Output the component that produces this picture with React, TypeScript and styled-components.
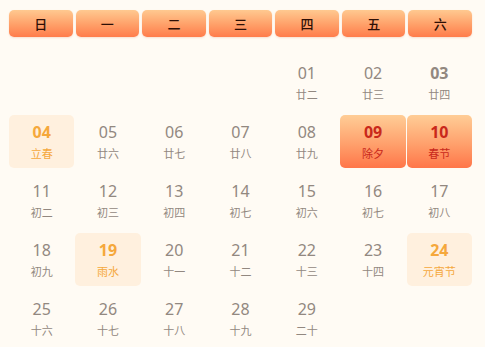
import styled, { createGlobalStyle, css } from "styled-components";

const GlobalStyle = createGlobalStyle`
  html, body {
    margin: 0;
    padding: 0;
    background: #fffbf4;
  }
  body {
    font-family: "Noto Sans", "Noto Sans CJK SC", sans-serif;
  }
`;

type Kind = "normal" | "today" | "term" | "festival";

interface Day {
  num: string;
  lunar: string;
  kind?: Kind;
}

const Page = styled.div`
  width: 463px;
  padding: 10px 13px 0 9px;
`;

const WeekRow = styled.div`
  display: grid;
  grid-template-columns: repeat(7, 1fr);
  column-gap: 3px;
  margin-bottom: 19px;
`;

const WeekCell = styled.div`
  height: 27px;
  border-radius: 5px;
  background: linear-gradient(180deg, #ffc990 0%, #ff9f68 55%, #ff7c4b 100%);
  box-shadow: 0 1px 2px rgba(220, 110, 60, 0.2);
  display: flex;
  align-items: center;
  justify-content: center;
  font-family: "Noto Sans CJK SC", sans-serif;
  font-size: 13px;
  font-weight: 500;
  color: #2e0f06;
`;

const DaysGrid = styled.div`
  display: grid;
  grid-template-columns: repeat(7, 1fr);
  column-gap: 1px;
  row-gap: 6px;
`;

const DayCell = styled.div<{ $kind: Kind }>`
  height: 53px;
  border-radius: 5px;
  display: flex;
  flex-direction: column;
  align-items: center;
  padding-top: 6px;
  box-sizing: border-box;
  color: #928880;
  ${(p) =>
    p.$kind === "term" &&
    css`
      background: #fff0de;
      color: #f5a83c;
    `}
  ${(p) =>
    p.$kind === "festival" &&
    css`
      background: linear-gradient(180deg, #ffcd96 0%, #ffa06c 55%, #ff7649 100%);
      color: #c9281b;
    `}
`;

const Num = styled.div<{ $bold: boolean }>`
  font-size: 16px;
  line-height: 22px;
  font-weight: ${(p) => (p.$bold ? 700 : 400)};
`;

const Lunar = styled.div`
  font-family: "Noto Sans CJK SC", sans-serif;
  font-size: 11px;
  line-height: 18px;
  margin-top: 1px;
`;

const weekdays = ["日", "一", "二", "三", "四", "五", "六"];

const days: (Day | null)[] = [
  null, null, null, null,
  { num: "01", lunar: "廿二" },
  { num: "02", lunar: "廿三" },
  { num: "03", lunar: "廿四", kind: "today" },
  { num: "04", lunar: "立春", kind: "term" },
  { num: "05", lunar: "廿六" },
  { num: "06", lunar: "廿七" },
  { num: "07", lunar: "廿八" },
  { num: "08", lunar: "廿九" },
  { num: "09", lunar: "除夕", kind: "festival" },
  { num: "10", lunar: "春节", kind: "festival" },
  { num: "11", lunar: "初二" },
  { num: "12", lunar: "初三" },
  { num: "13", lunar: "初四" },
  { num: "14", lunar: "初七" },
  { num: "15", lunar: "初六" },
  { num: "16", lunar: "初七" },
  { num: "17", lunar: "初八" },
  { num: "18", lunar: "初九" },
  { num: "19", lunar: "雨水", kind: "term" },
  { num: "20", lunar: "十一" },
  { num: "21", lunar: "十二" },
  { num: "22", lunar: "十三" },
  { num: "23", lunar: "十四" },
  { num: "24", lunar: "元宵节", kind: "term" },
  { num: "25", lunar: "十六" },
  { num: "26", lunar: "十七" },
  { num: "27", lunar: "十八" },
  { num: "28", lunar: "十九" },
  { num: "29", lunar: "二十" },
];

function App() {
  return (
    <>
      <GlobalStyle />
      <Page>
        <WeekRow>
          {weekdays.map((w) => (
            <WeekCell key={w}>{w}</WeekCell>
          ))}
        </WeekRow>
        <DaysGrid>
          {days.map((d, i) => {
            if (!d) return <DayCell key={i} $kind="normal" />;
            const kind = d.kind || "normal";
            return (
              <DayCell key={i} $kind={kind}>
                <Num $bold={kind !== "normal"}>{d.num}</Num>
                <Lunar>{d.lunar}</Lunar>
              </DayCell>
            );
          })}
        </DaysGrid>
      </Page>
    </>
  );
}

export default App;
